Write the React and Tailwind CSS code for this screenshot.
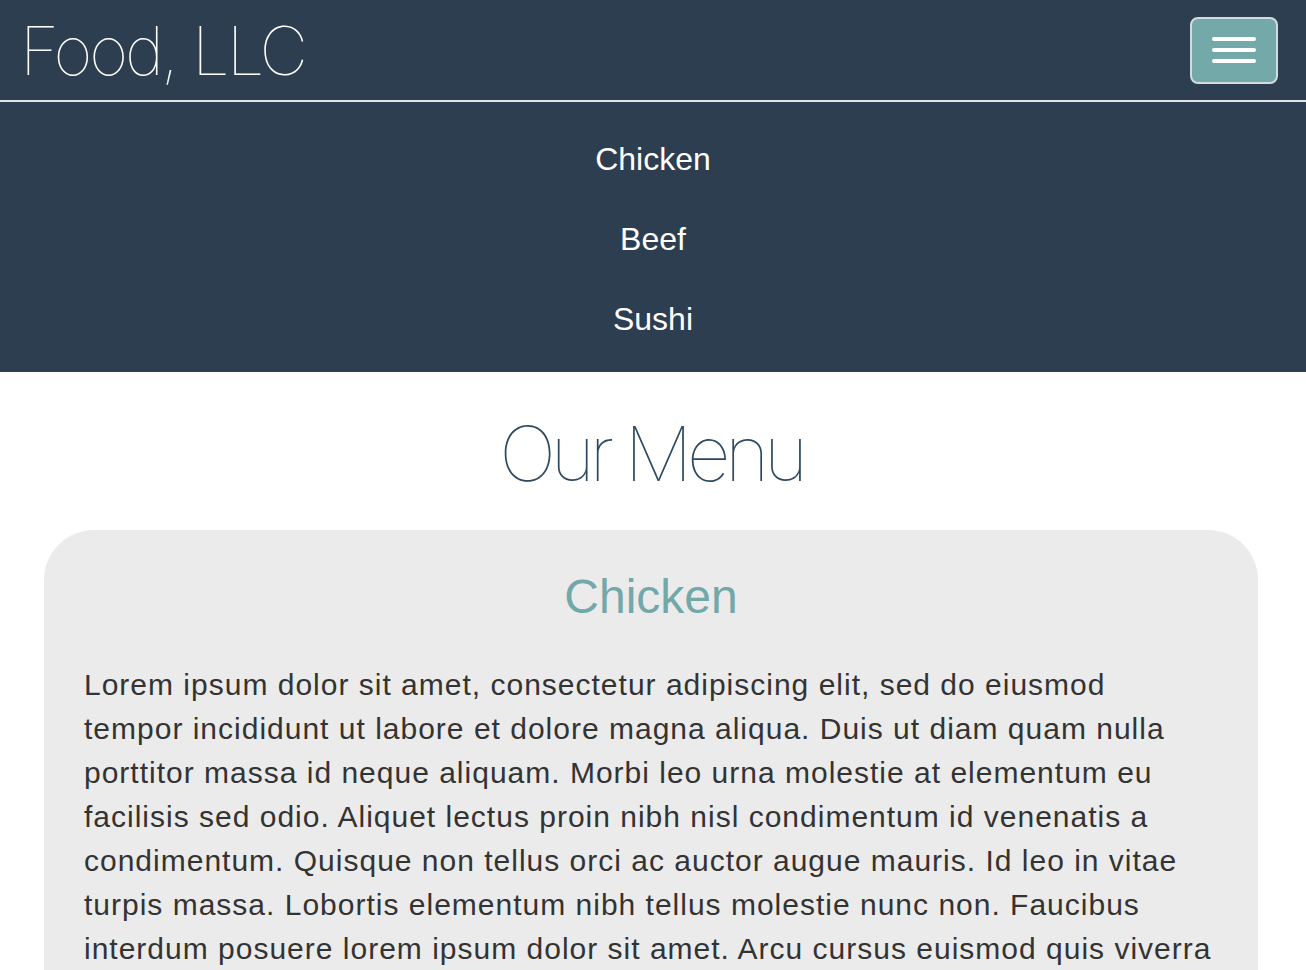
import React from "react";

const thin = { fontFamily: "Inter, 'Liberation Sans', sans-serif" };

const firstLine = "Lorem ipsum dolor sit amet, consectetur adipiscing elit, sed do eiusmod";
const rest =
  "tempor incididunt ut labore et dolore magna aliqua. Duis ut diam quam nulla porttitor massa id neque aliquam. Morbi leo urna molestie at elementum eu facilisis sed odio. Aliquet lectus proin nibh nisl condimentum id venenatis a condimentum. Quisque non tellus orci ac auctor augue mauris. Id leo in vitae turpis massa. Lobortis elementum nibh tellus molestie nunc non. Faucibus interdum posuere lorem ipsum dolor sit amet. Arcu cursus euismod quis viverra nibh cras pulvinar mattis. Nunc sed id semper risus in hendrerit gravida rutrum quisque.";

function Header() {
  return (
    <header className="bg-[#2c3e50] border-b-2 border-[#dfe5ea]">
      <div className="h-[100px] flex items-center justify-between pl-5 pr-7">
        <h1 className="text-[67px] leading-none font-thin text-white tracking-[-3px]" style={thin}>
          Food, LLC
        </h1>
        <button className="w-[88px] h-[67px] rounded-lg bg-[#74a9aa] border-2 border-[#d3dbe0] flex flex-col items-center justify-center gap-[7px]">
          <span className="block w-11 h-1 rounded-full bg-white" />
          <span className="block w-11 h-1 rounded-full bg-white" />
          <span className="block w-11 h-1 rounded-full bg-white" />
        </button>
      </div>
    </header>
  );
}

function Nav() {
  return (
    <nav className="bg-[#2c3e50] pt-[17px] pb-[13px]">
      {["Chicken", "Beef", "Sushi"].map((item) => (
        <a key={item} href="#" className="block h-20 leading-[80px] text-center text-[32px] text-white">
          {item}
        </a>
      ))}
    </nav>
  );
}

export default function App() {
  return (
    <div className="min-h-screen bg-white font-['Liberation_Sans',Arial,sans-serif]">
      <Header />
      <Nav />
      <main className="pl-11 pr-12 pb-10">
        <h2 className="mt-[43px] mb-[39px] text-center text-[76px] leading-none font-thin text-[#2c4a62] tracking-[-5.5px]" style={thin}>
          Our Menu
        </h2>
        <section className="bg-[#ebebeb] rounded-[50px] px-10 pt-[43px] pb-10">
          <h3 className="text-center text-[48px] leading-none text-[#73a8a9]">Chicken</h3>
          <p className="mt-[42px] text-[30px] leading-[44px] tracking-[1px] text-[#333333]">
            {firstLine}
            <br />
            {rest}
          </p>
        </section>
      </main>
    </div>
  );
}
